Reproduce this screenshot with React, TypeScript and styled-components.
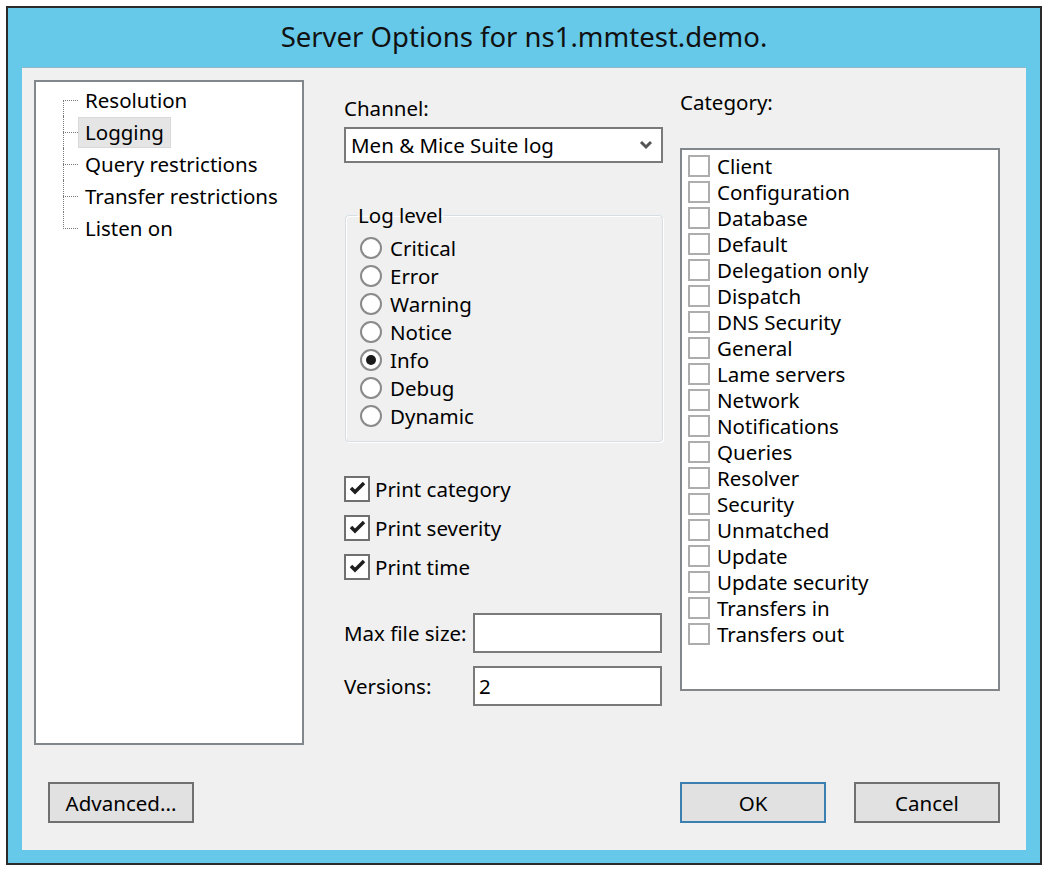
import React from 'react'
import styled, { createGlobalStyle } from 'styled-components'

const GlobalStyle = createGlobalStyle`
    body {
        margin: 0;
        background: #ffffff;
        font-family: "Noto Sans", "Open Sans", sans-serif;
    }
`

const treeItems = ['Resolution', 'Logging', 'Query restrictions', 'Transfer restrictions', 'Listen on']
const levels = ['Critical', 'Error', 'Warning', 'Notice', 'Info', 'Debug', 'Dynamic']
const printOptions = ['Print category', 'Print severity', 'Print time']
const categories = [
    'Client', 'Configuration', 'Database', 'Default', 'Delegation only', 'Dispatch',
    'DNS Security', 'General', 'Lame servers', 'Network', 'Notifications', 'Queries',
    'Resolver', 'Security', 'Unmatched', 'Update', 'Update security', 'Transfers in', 'Transfers out',
]

const App = () => {
    return (
        <>
            <GlobalStyle />
            <Window>
                <TitleBar>Server Options for ns1.mmtest.demo.</TitleBar>
                <Content>
                    <Main>
                        <Tree>
                            {treeItems.map((item, i) => (
                                <TreeRow key={item} first={i === 0} last={i === treeItems.length - 1}>
                                    <Connector />
                                    <TreeLabel selected={item === 'Logging'}>{item}</TreeLabel>
                                </TreeRow>
                            ))}
                        </Tree>

                        <Column width={319} offset={40}>
                            <Label top={16}>Channel:</Label>
                            <Select>
                                <span>Men &amp; Mice Suite log</span>
                                <svg width="14" height="10" viewBox="0 0 14 10">
                                    <polyline points="2,2 7,7 12,2" fill="none" stroke="#555" strokeWidth="3" />
                                </svg>
                            </Select>

                            <GroupBox>
                                <Legend>Log level</Legend>
                                {levels.map((level) => (
                                    <RadioRow key={level}>
                                        <Radio checked={level === 'Info'} />
                                        {level}
                                    </RadioRow>
                                ))}
                            </GroupBox>

                            <CheckList>
                                {printOptions.map((opt) => (
                                    <CheckRow key={opt}>
                                        <CheckBox>
                                            <svg width="19" height="17" viewBox="0 0 19 17">
                                                <polyline points="3,8 7,12 16,3" fill="none" stroke="#1e1e1e" strokeWidth="3.5" />
                                            </svg>
                                        </CheckBox>
                                        {opt}
                                    </CheckRow>
                                ))}
                            </CheckList>

                            <FieldGrid>
                                <span>Max file size:</span>
                                <TextBox />
                                <span>Versions:</span>
                                <TextBox>2</TextBox>
                            </FieldGrid>
                        </Column>

                        <Column width={320} offset={17}>
                            <Label top={10}>Category:</Label>
                            <ListBox>
                                {categories.map((c) => (
                                    <ListRow key={c}>
                                        <SmallBox />
                                        {c}
                                    </ListRow>
                                ))}
                            </ListBox>
                        </Column>
                    </Main>

                    <ButtonBar>
                        <Button>Advanced...</Button>
                        <ButtonGroup>
                            <Button primary>OK</Button>
                            <Button>Cancel</Button>
                        </ButtonGroup>
                    </ButtonBar>
                </Content>
            </Window>
        </>
    )
}

const Window = styled.div`
    margin: 6px 0 0 6px;
    width: 1036px;
    border: 2px solid #2b2b2b;
    background: #66c9e9;
    padding: 0 14px 13px 14px;
    box-sizing: border-box;
`

const TitleBar = styled.div`
    height: 59px;
    display: flex;
    align-items: center;
    justify-content: center;
    font-size: 27.5px;
    color: #111;
    padding-bottom: 2px;
    box-sizing: border-box;
`

const Content = styled.div`
    background: #f0f0f0;
    border-top: 1px solid #8fb9c9;
    padding: 12px 26px 27px 12px;
    font-size: 20.5px;
    color: #000;
`

const Main = styled.div`
    display: flex;
    align-items: flex-start;
`

const Tree = styled.div`
    width: 270px;
    height: 665px;
    box-sizing: border-box;
    border: 2px solid #82878c;
    background: #fff;
    padding: 2px 0 0 27px;
`

const TreeRow = styled.div<{ first?: boolean; last?: boolean }>`
    position: relative;
    height: 32px;
    display: flex;
    align-items: center;

    &::before {
        content: '';
        position: absolute;
        left: 0;
        top: ${(p) => (p.first ? '16px' : '0')};
        bottom: ${(p) => (p.last ? '15px' : '0')};
        border-left: 1px dotted #7a7a7a;
    }
`

const Connector = styled.span`
    width: 15px;
    border-top: 1px dotted #7a7a7a;
    align-self: center;
`

const TreeLabel = styled.span<{ selected?: boolean }>`
    padding: 0 6px;
    line-height: 29px;
    border: 1px solid ${(p) => (p.selected ? '#d9d9d9' : 'transparent')};
    background: ${(p) => (p.selected ? '#e5e5e5' : 'transparent')};
    white-space: nowrap;
`

const Column = styled.div<{ width: number; offset: number }>`
    width: ${(p) => p.width}px;
    margin-left: ${(p) => p.offset}px;
    display: flex;
    flex-direction: column;
`

const Label = styled.div<{ top: number }>`
    margin-top: ${(p) => p.top}px;
    line-height: 24px;
`

const Select = styled.div`
    margin-top: 7px;
    height: 36px;
    box-sizing: border-box;
    border: 2px solid #7a7a7a;
    background: #fff;
    display: flex;
    align-items: center;
    justify-content: space-between;
    padding: 0 8px 0 5px;
`

const GroupBox = styled.fieldset`
    margin: 40px 0 0 1px;
    padding: 7px 0 9px 14px;
    border: 1px solid #d5dfe5;
    border-radius: 4px;
    box-shadow: inset 1px 1px 0 #fff, 1px 1px 0 #fff;
    height: 239px;
    box-sizing: border-box;
`

const Legend = styled.legend`
    padding: 0 1px;
    margin-left: -3px;
    line-height: 24px;
`

const RadioRow = styled.div`
    height: 28px;
    display: flex;
    align-items: center;
    gap: 8px;
`

const Radio = styled.span<{ checked?: boolean }>`
    width: 22px;
    height: 22px;
    box-sizing: border-box;
    border-radius: 50%;
    border: 2px solid #8a8a8a;
    background: #fff;
    display: flex;
    align-items: center;
    justify-content: center;

    &::after {
        content: '';
        width: 10px;
        height: 10px;
        border-radius: 50%;
        background: ${(p) => (p.checked ? '#1b1b1b' : 'transparent')};
    }
`

const CheckList = styled.div`
    margin-top: 27px;
`

const CheckRow = styled.div`
    height: 39px;
    display: flex;
    align-items: center;
    gap: 5px;
`

const CheckBox = styled.span`
    width: 26px;
    height: 26px;
    box-sizing: border-box;
    border: 2px solid #707070;
    background: #fff;
    display: flex;
    align-items: center;
    justify-content: center;
`

const FieldGrid = styled.div`
    margin-top: 27px;
    display: grid;
    grid-template-columns: 129px 189px;
    row-gap: 13px;
    align-items: center;
`

const TextBox = styled.div`
    height: 40px;
    box-sizing: border-box;
    border: 2px solid #7a7a7a;
    background: #fff;
    display: flex;
    align-items: center;
    padding-left: 4px;
`

const ListBox = styled.div`
    margin-top: 34px;
    height: 543px;
    box-sizing: border-box;
    border: 2px solid #82878c;
    background: #fff;
    padding: 3px 0 0 6px;
`

const ListRow = styled.div`
    height: 26px;
    display: flex;
    align-items: center;
    gap: 7px;
`

const SmallBox = styled.span`
    width: 22px;
    height: 22px;
    box-sizing: border-box;
    border: 2px solid #adadad;
    background: #fff;
`

const ButtonBar = styled.div`
    margin-top: 37px;
    padding-left: 14px;
    display: flex;
    justify-content: space-between;
`

const ButtonGroup = styled.div`
    display: flex;
    gap: 28px;
`

const Button = styled.button<{ primary?: boolean }>`
    width: 146px;
    height: 41px;
    border: 2px solid ${(p) => (p.primary ? '#3c7fb1' : '#707070')};
    background: #e1e1e1;
    font: inherit;
    color: #000;
    padding: 0;
`

export default App
